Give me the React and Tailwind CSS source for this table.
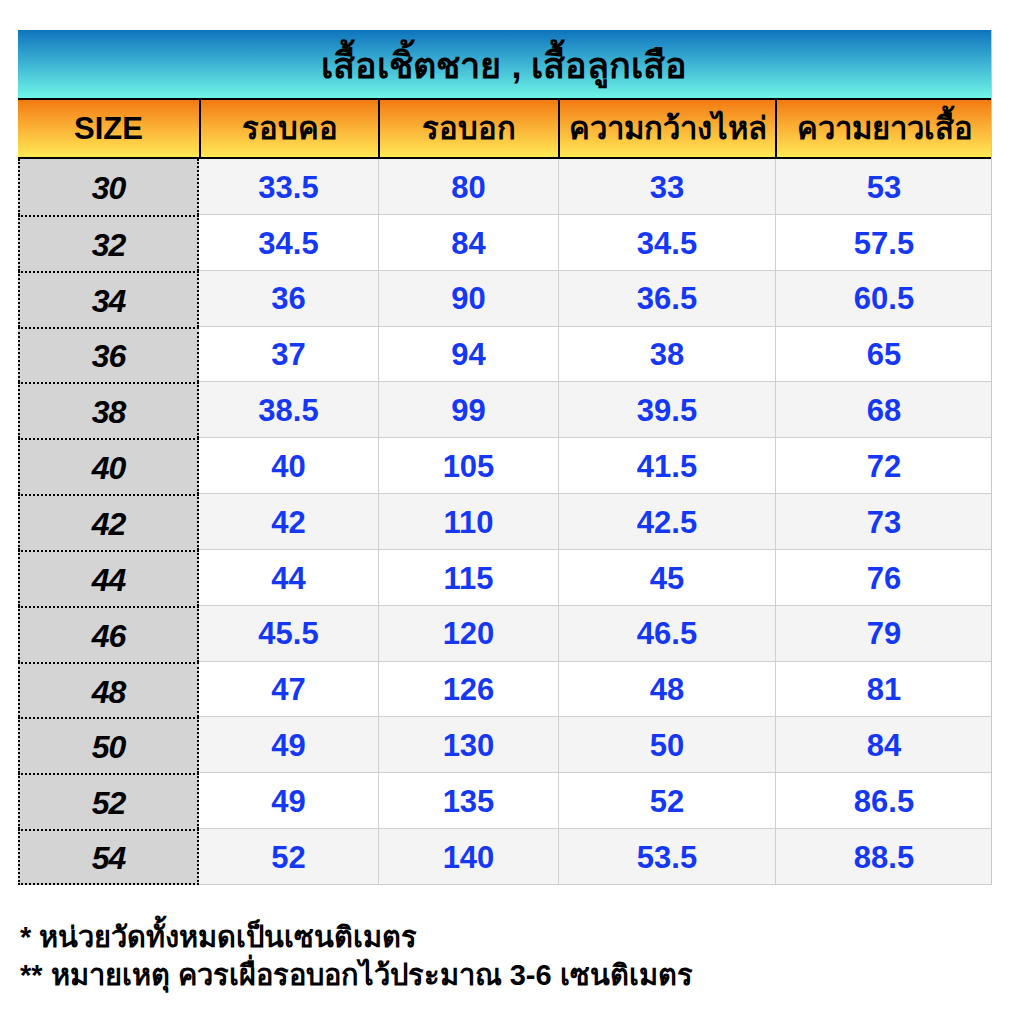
import React from 'react';

// size chart rows: size, neck, chest, shoulder, length
const rows = [
  ['30', '33.5', '80', '33', '53'],
  ['32', '34.5', '84', '34.5', '57.5'],
  ['34', '36', '90', '36.5', '60.5'],
  ['36', '37', '94', '38', '65'],
  ['38', '38.5', '99', '39.5', '68'],
  ['40', '40', '105', '41.5', '72'],
  ['42', '42', '110', '42.5', '73'],
  ['44', '44', '115', '45', '76'],
  ['46', '45.5', '120', '46.5', '79'],
  ['48', '47', '126', '48', '81'],
  ['50', '49', '130', '50', '84'],
  ['52', '49', '135', '52', '86.5'],
  ['54', '52', '140', '53.5', '88.5'],
];

const headers = ['SIZE', 'รอบคอ', 'รอบอก', 'ความกว้างไหล่', 'ความยาวเสื้อ'];
const cols = 'grid grid-cols-[181px_179px_180px_217px_217px]';

const App = () => {
  return (
    <div className="min-h-[1024px] w-[1024px] bg-white pt-[30px] pl-[18px] font-['Liberation_Sans',sans-serif]">
      <div className="w-[974px] border-r border-[#c8c8c8]">
        {/* title bar */}
        <div className="h-[68px] pt-[3px] flex items-center justify-center bg-gradient-to-b from-[#0e74bd] to-[#6ff6e6] text-[36px] font-bold text-black leading-none">
          เสื้อเชิ้ตชาย , เสื้อลูกเสือ
        </div>

        {/* header row */}
        <div className={`${cols} h-[61px] border-y-2 border-black bg-gradient-to-b from-[#f17a0f] to-[#ffe955]`}>
          {headers.map((h, i) => (
            <div
              key={h}
              className={`flex items-center justify-center text-[31px] font-bold text-black leading-none ${i > 0 ? 'border-l-2 border-black' : ''}`}
            >
              {h}
            </div>
          ))}
        </div>

        {/* data rows */}
        {rows.map((r, ri) => (
          <div key={r[0]} className={`${cols} h-[55.85px] ${ri % 2 === 0 ? 'bg-[#f4f4f4]' : 'bg-white'}`}>
            <div className={`flex items-center justify-center pt-[2px] bg-[#d4d4d4] border-l-2 border-r-2 border-dotted border-black text-[32px] font-bold italic text-black tracking-[-1px] ${ri === rows.length - 1 ? 'border-b-2' : ''} ${ri > 0 ? 'border-t-2' : ''}`}>
              {r[0]}
            </div>
            {r.slice(1).map((v, ci) => (
              <div
                key={ci}
                className={`flex items-center justify-center pt-[3px] text-[31px] font-bold text-[#1538f5] border-b border-[#cfcfcf] ${ci > 0 ? 'border-l border-[#cfcfcf]' : ''}`}
              >
                {v}
              </div>
            ))}
          </div>
        ))}
      </div>

      {/* notes */}
      <div className="mt-[33px] ml-[2px] text-[29px] font-bold text-black leading-[38px]">
        <p>* หน่วยวัดทั้งหมดเป็นเซนติเมตร</p>
        <p>** หมายเหตุ ควรเผื่อรอบอกไว้ประมาณ 3-6 เซนติเมตร</p>
      </div>
    </div>
  );
};

export default App;
